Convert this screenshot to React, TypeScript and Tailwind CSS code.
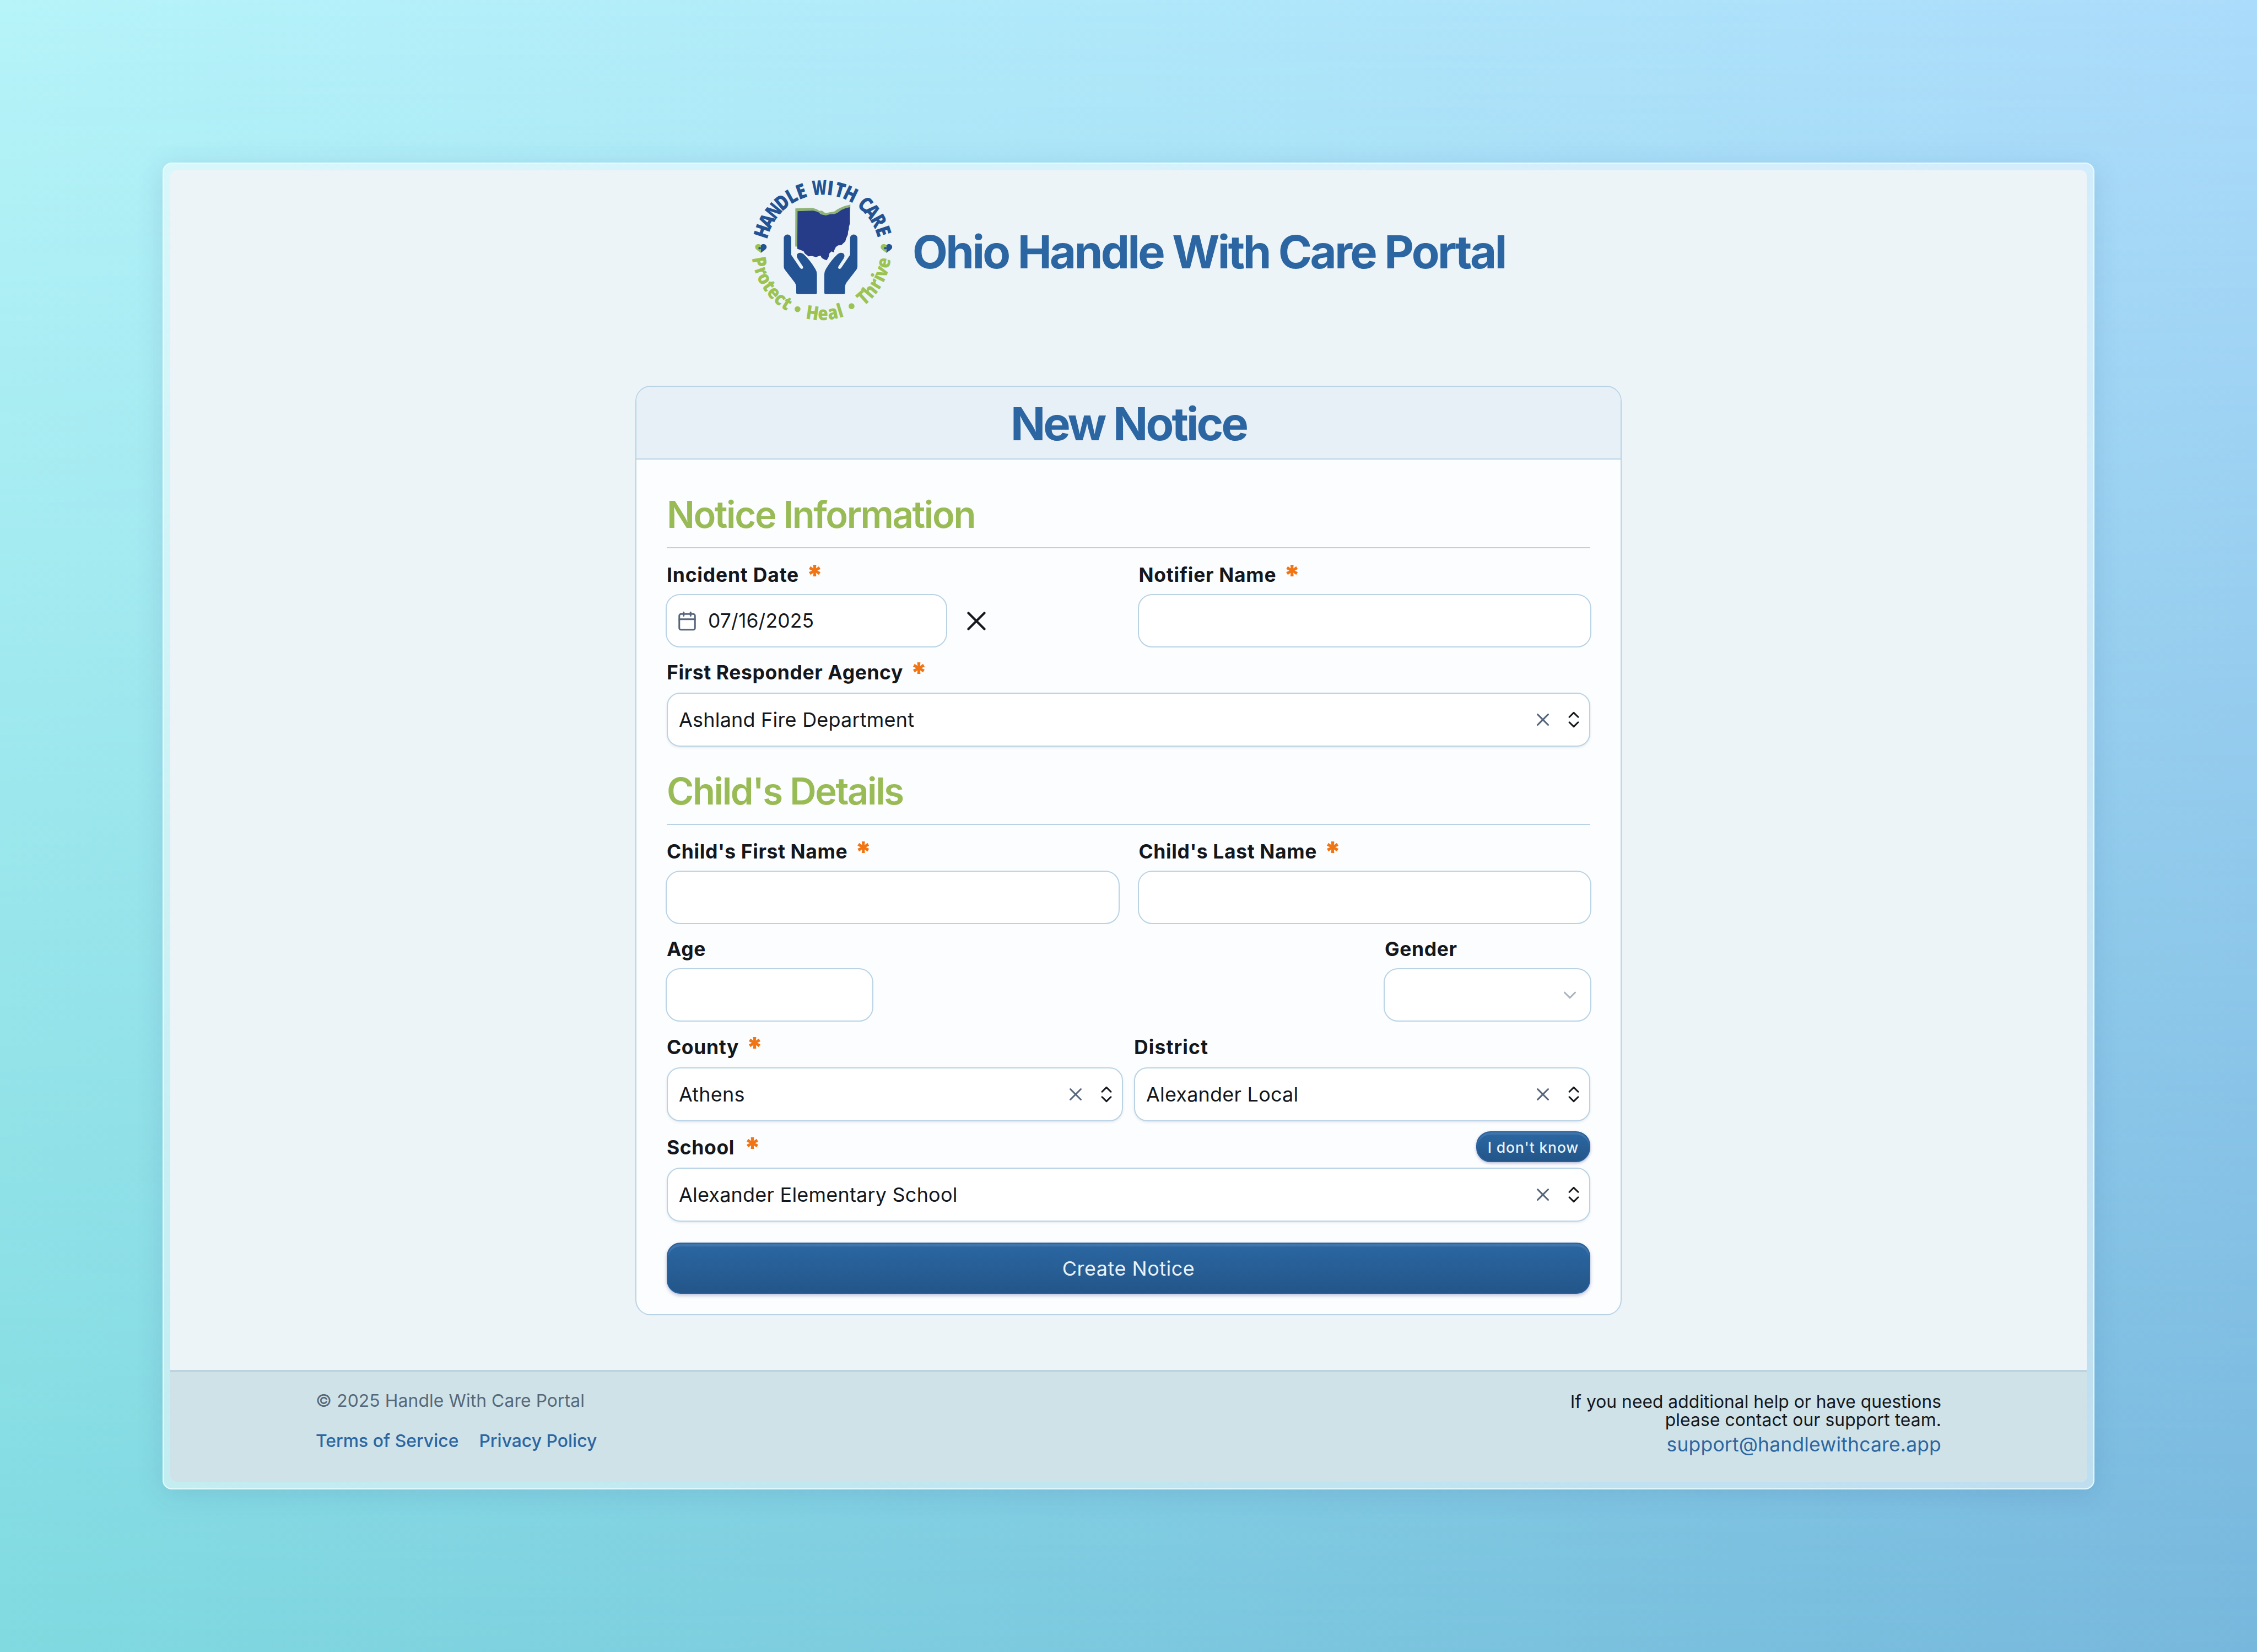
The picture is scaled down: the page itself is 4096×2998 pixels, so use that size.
import React from "react";
import { Calendar, ChevronDown, X } from "lucide-react";

type Glyph = { ch: string; x: number; y: number; rot: number; sx: number };

const TOP_CENTER = { x: 585, y: 560, r: 383 };
const BOTTOM_CENTER = { x: 577, y: 553, r: 472 };

const topGlyphs: [string, number, number][] = [
  ["H", -71.6, 0.84], ["A", -61.2, 0.82], ["N", -50.3, 0.76], ["D", -39.6, 0.82], ["L", -29.2, 0.84], ["E", -19.8, 0.87],
  ["W", -2.9, 0.71], ["I", 7, 0.87], ["T", 15.8, 0.84], ["H", 26, 0.84],
  ["C", 41.9, 0.84], ["A", 51, 0.82], ["R", 61.2, 0.82], ["E", 71.4, 0.87],
];

const bottomGlyphs: [string, number][] = [
  ["P", 79.5], ["r", 71], ["o", 63.7], ["t", 56], ["e", 48.3], ["c", 40.4], ["t", 33],
  ["H", 8.2], ["e", -1.3], ["a", -10.2], ["l", -17],
  ["T", -41.2], ["h", -50], ["r", -58.3], ["i", -64.3], ["v", -70.4], ["e", -78.8],
];

const rad = Math.PI / 180;

const topPlaced: Glyph[] = topGlyphs.map(([ch, a, sx]) => ({
  ch, sx, rot: a,
  x: TOP_CENTER.x + TOP_CENTER.r * Math.sin(a * rad),
  y: TOP_CENTER.y - TOP_CENTER.r * Math.cos(a * rad),
}));

const bottomPlaced: Glyph[] = bottomGlyphs.map(([ch, a]) => ({
  ch, sx: 0.86, rot: a,
  x: BOTTOM_CENTER.x - BOTTOM_CENTER.r * Math.sin(a * rad),
  y: BOTTOM_CENTER.y + BOTTOM_CENTER.r * Math.cos(a * rad),
}));

const HAND =
  "M322 470 a25 25 0 0 1 50 0 L372 583 L432 671 Q440 681 449 676 Q456 670 450 660 L415 607 Q403 585 418 573 Q438 562 456 578 Q500 618 535 678 Q546 696 546 714 L546 838 Q546 848 536 848 L416 848 Q406 848 406 838 L406 798 Q404 780 396 770 L330 684 Q322 674 322 662 Z";

function Heart({ x }: { x: number }) {
  return (
    <g transform={`translate(${x} 538)`}>
      <path d="M0 -20 C-12 -34 -38 -28 -39 -8 C-39 8 -18 18 0 32 Z" fill="#9cc352" />
      <path d="M0 -20 C12 -34 38 -28 39 -8 C39 8 18 18 0 32 Z" fill="#235393" />
      <circle cx="-9" cy="0" r="8" fill="#235393" />
      <rect x="-6" y="-5" width="8" height="9" fill="#235393" />
    </g>
  );
}

function Logo() {
  return (
    <svg className="h-[298px] w-[306px] shrink-0 overflow-visible" viewBox="0 0 1140 1110">
      <g fontFamily='"Open Sans", sans-serif' fontWeight={800} textAnchor="middle">
        {topPlaced.map((g, i) => (
          <text key={i} fontSize="137" fill="#235393" transform={`translate(${g.x} ${g.y}) rotate(${g.rot}) scale(${g.sx} 1)`}>{g.ch}</text>
        ))}
        {bottomPlaced.map((g, i) => (
          <text key={i} fontSize="130" fill="#9cc352" transform={`translate(${g.x} ${g.y}) rotate(${g.rot}) scale(${g.sx} 1)`}>{g.ch}</text>
        ))}
      </g>
      <circle cx="415" cy="950" r="20" fill="#9cc352" />
      <circle cx="780" cy="930" r="20" fill="#9cc352" />
      <Heart x={167} />
      <Heart x={1016} />
      <path d="M400 269 L470 266 L518 265 Q545 272 562 286 L580 284 L603 301 L664 290 Q705 256 772 243 L770 372 L740 420 L430 530 L399 526 Z" fill="#8fb377" />
      <path
        d="M415 288 L520 284 Q545 288 560 297 L570 308 L606 317 L636 308 L665 307 Q690 298 710 280 Q738 266 768 261 L768 372 L762 396 L762 410 L757 424 L755 446 L742 476 L738 492 L712 517 L690 519 L674 530 L663 552 L662 567 L645 560 L631 572 L625 598 L612 619 L597 615 L579 604 L570 588 L540 598 L510 590 L490 593 L465 575 L455 558 L428 548 L413 542 Z"
        fill="#263c88"
      />
      <path d={HAND} fill="#235393" />
      <path d={HAND} fill="#235393" transform="translate(1142 0) scale(-1 1)" />
    </svg>
  );
}

function ChevronsIcon() {
  return (
    <svg className="h-[38px] w-[38px] shrink-0" viewBox="0 0 38 38" fill="none" stroke="#14171c" strokeWidth="3" strokeLinecap="round" strokeLinejoin="round">
      <path d="M11 14.2 L19 6.4 L27 14.2" />
      <path d="M11 23.8 L19 31.6 L27 23.8" />
    </svg>
  );
}

function Label({ text, required, tracking = "tracking-[0.6px]", className = "", star = "ml-[13px]" }: { text: string; required?: boolean; tracking?: string; className?: string; star?: string }) {
  return (
    <div className={`flex items-end text-[35.5px] leading-[35px] font-[650] text-[#14171c] ${className}`}>
      <span className={`whitespace-nowrap ${tracking}`}>{text}</span>
      {required && <span className={`${star} h-[35px] text-[51px] leading-[35px] font-black text-[#f27514]`}>*</span>}
    </div>
  );
}

function Field({ className = "", children }: { className?: string; children?: React.ReactNode }) {
  return <div className={`flex h-[97px] items-center rounded-[26px] border-2 border-[#b9d3e5] bg-white ${className}`}>{children}</div>;
}

function Select({ value }: { value: string }) {
  return (
    <div className="flex h-[98px] items-center gap-[18px] rounded-[24px] border-2 border-[#b9d3e5] bg-white pr-[9px] pl-[20px] shadow-[0_2px_4px_rgba(30,60,100,0.1)]">
      <span className="flex-1 text-[36px] leading-[44px] tracking-[0.2px] whitespace-nowrap text-[#14171c]">{value}</span>
      <X size={38} strokeWidth={1.9} className="shrink-0 text-[#55667c]" />
      <ChevronsIcon />
    </div>
  );
}

function SectionTitle({ text, className = "" }: { text: string; className?: string }) {
  return (
    <h2 className={`h-[94px] border-b-2 border-[#b9d3e5] text-[67px] leading-[66px] font-semibold tracking-[-2.4px] text-[#99bb55] ${className}`}>{text}</h2>
  );
}

export default function App() {
  return (
    <div className="relative h-[2998px] w-[4096px] overflow-hidden bg-gradient-to-r from-[#b6f4f9] to-[#acdcfb] font-['Inter',sans-serif]">
      <div className="absolute inset-0 bg-gradient-to-r from-[#80dae0] to-[#77b7dd] [mask-image:linear-gradient(to_bottom,transparent,black)]" />
      <div className="relative flex h-full w-full px-[295px] py-[295px]">
        <div className="flex w-full flex-col rounded-[17px] border-2 border-[#e6fbfd] bg-white/50 p-[12px] shadow-[0_8px_48px_rgba(50,90,150,0.16)]">
          <div className="flex flex-1 flex-col overflow-hidden rounded-[10px] bg-[#ecf4f8]">
            <header className="flex h-[391px] gap-[14px] pl-[1027px]">
              <div className="-mt-[3px]">
                <Logo />
              </div>
              <h1 className="mt-[107px] text-[83px] leading-[82px] font-[650] tracking-[-3.6px] whitespace-nowrap text-[#2c66a2]">Ohio Handle With Care Portal</h1>
            </header>

            <main className="mx-auto h-[1687px] w-[1790px] overflow-hidden rounded-[28px] border-2 border-[#b9d3e5] bg-[#fcfdfe]">
              <div className="h-[132px] border-b-2 border-[#b9d3e5] bg-[#e7f0f6] pt-[26px] text-center text-[83px] leading-[82px] font-[650] tracking-[-3.9px] text-[#2c66a2]">New Notice</div>
              <div className="flex flex-col px-[55px] pt-[67px]">
                <SectionTitle text="Notice Information" />
                <div className="-mx-[2px] flex gap-[33px]">
                  <div className="flex-1">
                    <Label text="Incident Date" required className="h-[83px] pb-[17px] pl-[2px]" tracking="tracking-[0.8px]" />
                    <div className="flex items-center">
                      <Field className="w-[511px] pl-[18px]">
                        <Calendar size={38} strokeWidth={1.9} className="text-[#55667c]" />
                        <span className="ml-[19px] pt-px text-[35.5px] leading-[44px] tracking-[0.1px] text-[#14171c]">07/16/2025</span>
                      </Field>
                      <X size={58} strokeWidth={1.75} className="ml-[24px] text-[#14171c]" />
                    </div>
                  </div>
                  <div className="flex-1">
                    <Label text="Notifier Name" required className="h-[83px] pb-[17px] pl-[2px]" tracking="tracking-[0.7px]" />
                    <Field />
                  </div>
                </div>
                <Label text="First Responder Agency" required className="h-[82px] pb-[19px]" />
                <Select value="Ashland Fire Department" />

                <SectionTitle text="Child's Details" className="mt-[48px]" />
                <div className="-mx-[2px] flex gap-[33px]">
                  <div className="flex-1">
                    <Label text="Child's First Name" required className="h-[83px] pb-[17px] pl-[2px]" />
                    <Field />
                  </div>
                  <div className="flex-1">
                    <Label text="Child's Last Name" required className="h-[83px] pb-[17px] pl-[2px]" />
                    <Field />
                  </div>
                </div>
                <div className="-mx-[2px] flex justify-between">
                  <div className="w-[377px]">
                    <Label text="Age" className="h-[80px] pb-[17px] pl-[2px]" />
                    <Field />
                  </div>
                  <div className="w-[377px]">
                    <Label text="Gender" className="h-[80px] pb-[17px] pl-[2px]" />
                    <Field className="justify-end pr-[18px]">
                      <ChevronDown size={38} strokeWidth={2} className="text-[#a9b4c0]" />
                    </Field>
                  </div>
                </div>
                <div className="flex gap-[20px]">
                  <div className="flex-1">
                    <Label text="County" required className="h-[83px] pb-[19px]" />
                    <Select value="Athens" />
                  </div>
                  <div className="flex-1">
                    <Label text="District" className="h-[83px] pb-[19px]" tracking="tracking-[1.1px]" />
                    <Select value="Alexander Local" />
                  </div>
                </div>
                <div className="flex h-[84px] justify-between">
                  <Label text="School" required className="pb-[19px]" star="ml-[17px]" />
                  <button className="mt-[18px] h-[56px] w-[207px] rounded-[26px] border-2 border-[#2a609b] bg-gradient-to-b from-[#2b67a3] to-[#235689] pt-px text-center text-[26.5px] leading-[52px] font-medium tracking-[0.85px] whitespace-nowrap text-[#e9f2f9] shadow-[0_2px_5px_rgba(40,50,130,0.35),inset_0_4px_0_rgba(255,255,255,0.1)]">I don't know</button>
                </div>
                <Select value="Alexander Elementary School" />
                <button className="mt-[38px] h-[93px] rounded-[25px] border-2 border-[#2a609b] bg-gradient-to-b from-[#2b67a3] to-[#235689] pt-[2px] text-center text-[36px] leading-[87px] tracking-[0.5px] text-[#e9f2f9] shadow-[0_3px_6px_rgba(40,50,130,0.3),inset_0_5px_0_rgba(255,255,255,0.1)]">Create Notice</button>
              </div>
            </main>

            <footer className="mt-auto flex h-[203px] justify-between border-t-4 border-[#bcd3e2] bg-[#cfe2e8] px-[264px]">
              <div className="flex flex-col gap-[41px] pt-[36px] text-[31.8px] leading-[32px]">
                <span className="tracking-[0.1px] text-[#55687a]">© 2025 Handle With Care Portal</span>
                <div className="flex gap-[37px] font-medium tracking-[0.05px] text-[#2c66a2]">
                  <a>Terms of Service</a>
                  <a>Privacy Policy</a>
                </div>
              </div>
              <div className="flex flex-col items-end pt-[38px]">
                <span className="text-[31.8px] leading-[32.5px] text-[#14171c]">If you need additional help or have questions</span>
                <span className="text-[31.8px] leading-[32.5px] tracking-[0.1px] text-[#14171c]">please contact our support team.</span>
                <span className="mt-[11px] text-[35.5px] leading-[35px] tracking-[0.15px] text-[#2c66a2]">support@handlewithcare.app</span>
              </div>
            </footer>
          </div>
        </div>
      </div>
    </div>
  );
}
